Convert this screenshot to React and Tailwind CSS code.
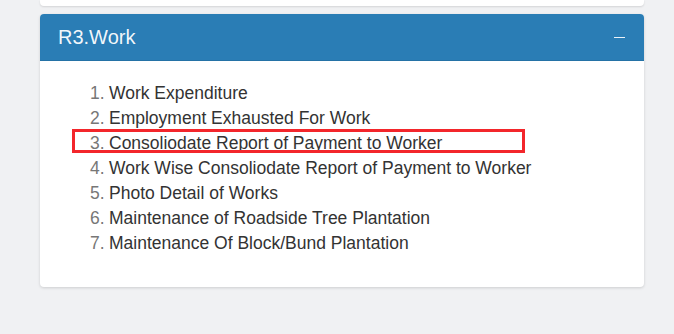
import React from 'react';

const items = [
  'Work Expenditure',
  'Employment Exhausted For Work',
  'Consoliodate Report of Payment to Worker',
  'Work Wise Consoliodate Report of Payment to Worker',
  'Photo Detail of Works',
  'Maintenance of Roadside Tree Plantation',
  'Maintenance Of Block/Bund Plantation',
];

export default function App() {
  return (
    <div className="w-[674px] h-[334px] bg-[#f0f1f3] overflow-hidden font-['Liberation_Sans',Arial,sans-serif]">
      <div className="ml-[40px] w-[604px]">
        {/* previous card, only its bottom edge shows */}
        <div className="h-[6px] bg-white rounded-b-[4px] shadow-[0_1px_2px_rgba(0,0,0,0.12)]" />

        <div className="mt-[8px] bg-white rounded-[4px] shadow-[0_1px_3px_rgba(0,0,0,0.15)] overflow-hidden">
          <div className="h-[47px] bg-[#2a7db5] border-b border-[#2472a6] flex items-center justify-between pl-[18px] pr-[19px]">
            <h3 className="text-[20px] text-white/95 leading-none">R3.Work</h3>
            <span className="block w-[11px] h-px bg-white/90" />
          </div>

          <ul className="pt-[20px] pb-[31px] pl-[50px]">
            {items.map((item, i) => (
              <li key={item} className="relative flex text-[17.5px] leading-[25px] h-[25px]">
                <span className="w-[19px] text-[#777]">{i + 1}.</span>
                <span className="text-[#333]">{item}</span>
                {i === 2 && (
                  <span className="absolute left-[-18px] top-[-2px] w-[453px] h-[24px] border-[3px] border-[#f3262b]" />
                )}
              </li>
            ))}
          </ul>
        </div>
      </div>
    </div>
  );
}
